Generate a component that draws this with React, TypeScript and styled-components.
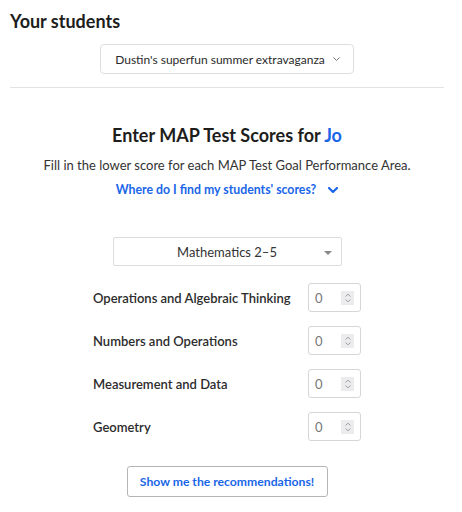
import React from "react";
import styled, { createGlobalStyle } from "styled-components";

const Global = createGlobalStyle`
  html, body { margin: 0; padding: 0; background: #fff; }
  body { font-family: Lato, "Open Sans", sans-serif; color: #222; }
  * { box-sizing: border-box; }
`;

const Page = styled.div`
  width: 462px;
  padding: 10px 18px 0 10px;
`;

const Title = styled.h1`
  margin: 0;
  font-size: 18px;
  font-weight: 700;
  line-height: 22px;
  color: #1d1d1d;
`;

const ClassRow = styled.div`
  display: flex;
  justify-content: center;
  margin-top: 12px;
`;

const ClassPicker = styled.div`
  display: flex;
  align-items: center;
  gap: 8px;
  height: 30px;
  padding: 0 13px 0 14px;
  border: 1px solid #dedede;
  border-radius: 4px;
  font-size: 12px;
  color: #2a2a2a;
`;

const Divider = styled.hr`
  margin: 13px 0 0;
  border: 0;
  border-top: 1px solid #e3e3e3;
`;

const Section = styled.div`
  display: flex;
  flex-direction: column;
  align-items: center;
`;

const Heading = styled.h2`
  margin: 36px 0 0;
  font-size: 18px;
  font-weight: 700;
  line-height: 22px;
  color: #1d1d1d;
`;

const Accent = styled.span`
  color: #1a66e8;
`;

const Sub = styled.p`
  margin: 11px 0 0;
  font-size: 13px;
  line-height: 16px;
  color: #333;
`;

const HelpLink = styled.a`
  display: flex;
  align-items: center;
  gap: 12px;
  margin-top: 9px;
  font-size: 12.3px;
  font-weight: 700;
  line-height: 16px;
  color: #1a66e8;
  text-decoration: none;
`;

const Select = styled.div`
  position: relative;
  width: 229px;
  height: 29px;
  margin-top: 39px;
  border: 1px solid #dcdcdc;
  border-radius: 2px;
  display: flex;
  align-items: center;
  justify-content: center;
  font-size: 13px;
  color: #333;
`;

const Caret = styled.span`
  position: absolute;
  right: 9px;
  top: 13px;
  width: 0;
  height: 0;
  border-left: 4px solid transparent;
  border-right: 4px solid transparent;
  border-top: 4px solid #888;
`;

const Form = styled.div`
  width: 268px;
  margin-top: 17px;
  display: flex;
  flex-direction: column;
  gap: 14px;
`;

const Row = styled.div`
  display: flex;
  align-items: center;
  justify-content: space-between;
  height: 29px;
`;

const Label = styled.span`
  font-size: 13px;
  font-weight: 600;
  color: #2c2c2c;
`;

const NumBox = styled.div`
  width: 53px;
  height: 29px;
  border: 1px solid #d6d6d6;
  border-radius: 3px;
  display: flex;
  align-items: center;
  justify-content: space-between;
  padding: 0 6px 0 6px;
  font-size: 13px;
  color: #777;
`;

const Spin = styled.span`
  width: 13px;
  height: 14px;
  background: #ececef;
  display: flex;
  align-items: center;
  justify-content: center;
`;

const Button = styled.button`
  margin-top: 25px;
  width: 201px;
  height: 31px;
  background: #fff;
  border: 1px solid #b5b5b5;
  border-radius: 3px;
  font-family: Lato, sans-serif;
  font-size: 12.2px;
  font-weight: 700;
  color: #1a66e8;
`;

const Chevron = ({ size = 9, color = "#555", w = 1.3 }: { size?: number; color?: string; w?: number }) => (
  <svg width={size} height={size * 0.6} viewBox="0 0 10 6">
    <path d="M1 1l4 4 4-4" fill="none" stroke={color} strokeWidth={w} strokeLinecap="round" strokeLinejoin="round" />
  </svg>
);

const SpinIcon = () => (
  <svg width="8" height="10" viewBox="0 0 8 10">
    <path d="M1.5 3.5L4 1.2l2.5 2.3M1.5 6.5L4 8.8l2.5-2.3" fill="none" stroke="#999" strokeWidth="0.9" />
  </svg>
);

const areas = [
  "Operations and Algebraic Thinking",
  "Numbers and Operations",
  "Measurement and Data",
  "Geometry",
];

export default function App() {
  return (
    <Page>
      <Global />
      <Title>Your students</Title>
      <ClassRow>
        <ClassPicker>
          Dustin's superfun summer extravaganza
          <Chevron size={7} color="#666" w={1.3} />
        </ClassPicker>
      </ClassRow>
      <Divider />
      <Section>
        <Heading>
          Enter MAP Test Scores for <Accent>Jo</Accent>
        </Heading>
        <Sub>Fill in the lower score for each MAP Test Goal Performance Area.</Sub>
        <HelpLink href="#">
          Where do I find my students' scores?
          <Chevron size={10} color="#1a66e8" w={2.2} />
        </HelpLink>
        <Select>
          Mathematics 2–5
          <Caret />
        </Select>
        <Form>
          {areas.map((a) => (
            <Row key={a}>
              <Label>{a}</Label>
              <NumBox>
                0
                <Spin>
                  <SpinIcon />
                </Spin>
              </NumBox>
            </Row>
          ))}
        </Form>
        <Button>Show me the recommendations!</Button>
      </Section>
    </Page>
  );
}
